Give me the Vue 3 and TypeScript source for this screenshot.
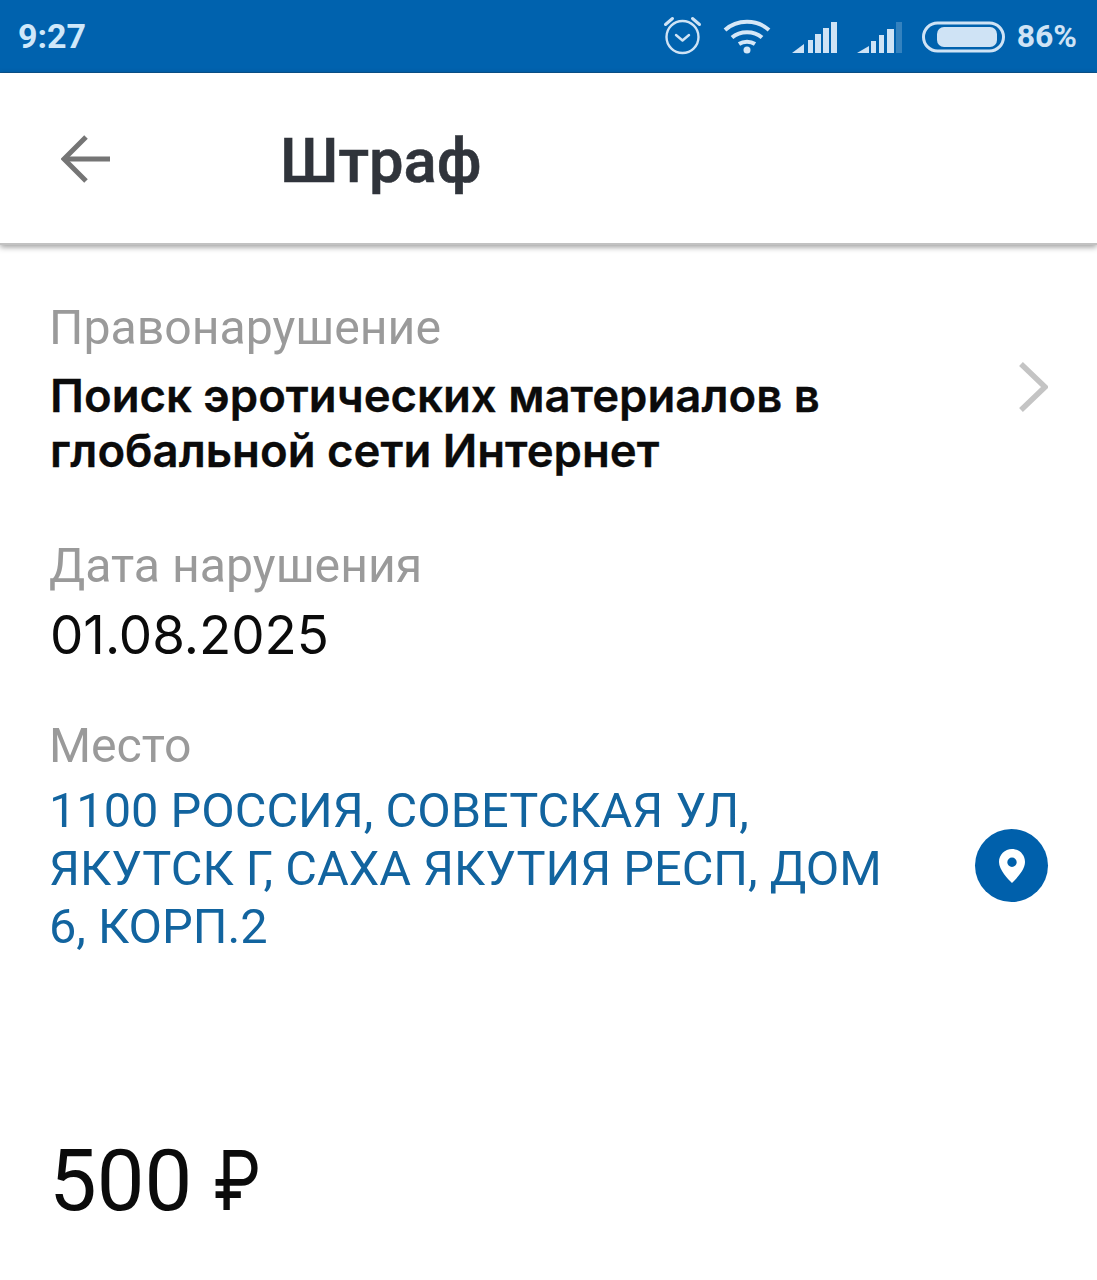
<script setup lang="ts">
</script>

<template>
  <div class="screen">
    <header class="status">
      <span class="time">9:27</span>
      <div class="status-right">
        <svg class="alarm" width="40" height="40" viewBox="0 0 40 40" fill="none" stroke="#cfe3f5" stroke-width="2.4">
          <circle cx="19.500" cy="21" r="16" />
          <path d="M13 19l6.500 5.500 6.500-5.500" stroke-linecap="round" stroke-linejoin="round" />
          <path d="M2.500 8.500L9.500 2.500M36.500 8.500L29.500 2.500" stroke-width="3" stroke-linecap="round" />
        </svg>
        <svg class="wifi" width="48" height="36" viewBox="0 0 48 36" fill="none" stroke="#d5e7f7" stroke-width="4">
          <path d="M2 12C14 1 34 1 46 12" />
          <path d="M9 19.500C17 12.500 31 12.500 39 19.500" />
          <path d="M16 26C20.500 23 27.500 23 32 26" />
          <circle cx="24" cy="32" r="3.500" fill="#d5e7f7" stroke="none" />
        </svg>
        <svg class="sig" width="46" height="32" viewBox="0 0 46 32" fill="#cfe3f5">
          <path d="M0 31L12 22V31Z" />
          <rect x="16" y="18" width="5" height="13" />
          <rect x="23" y="12" width="6" height="19" />
          <rect x="31" y="6" width="6" height="25" />
          <rect x="39" y="0" width="6" height="31" />
        </svg>
        <svg class="sig" width="46" height="32" viewBox="0 0 46 32" fill="#cfe3f5">
          <path d="M0 31L12 24V31Z" />
          <rect x="14" y="19" width="5" height="12" />
          <rect x="22" y="13" width="5" height="18" />
          <rect x="30" y="7" width="7" height="24" />
          <rect x="39" y="0" width="6" height="31" opacity="0.25" />
        </svg>
        <svg class="batt" width="84" height="32" viewBox="0 0 84 32" fill="none">
          <rect x="1.500" y="2" width="80" height="28" rx="14" stroke="#cfe3f5" stroke-width="3" />
          <rect x="15" y="6" width="60" height="20" rx="7" fill="#cfe3f5" />
        </svg>
        <span class="pct">86%</span>
      </div>
    </header>

    <nav class="toolbar">
      <svg class="back" width="50" height="48" viewBox="0 0 50 48" fill="none" stroke="#757575" stroke-width="5">
        <path d="M49 24H4" />
        <path d="M25 2L3 24L25 46" />
      </svg>
      <h1 class="title">Штраф</h1>
    </nav>

    <main class="content">
      <section class="block offence">
        <div class="grow">
          <div class="label">Правонарушение</div>
          <div class="strong">Поиск эротических материалов в<br />глобальной сети Интернет</div>
        </div>
        <svg class="chevron" width="30" height="50" viewBox="0 0 30 50" fill="none" stroke="#c4c4c4" stroke-width="5.500">
          <path d="M3 2L27 25L3 48" />
        </svg>
      </section>

      <section class="block date">
        <div class="label">Дата нарушения</div>
        <div class="value">01.08.2025</div>
      </section>

      <section class="block place">
        <div class="grow">
          <div class="label">Место</div>
          <div class="address">1100 РОССИЯ, СОВЕТСКАЯ УЛ,<br />ЯКУТСК Г, САХА ЯКУТИЯ РЕСП, ДОМ<br />6, КОРП.2</div>
        </div>
        <div class="pin">
          <svg width="26" height="34" viewBox="0 0 26 34">
            <path fill="#fff" fill-rule="evenodd" d="M13 0C5.800 0 0 5.800 0 13C0 21 9 30 13 34C17 30 26 21 26 13C26 5.800 20.200 0 13 0ZM13 8.500A4.700 4.700 0 1 1 13 17.900A4.700 4.700 0 1 1 13 8.500Z" />
          </svg>
        </div>
      </section>

      <div class="amount">500 <span class="rub">₽</span></div>
    </main>
  </div>
</template>

<style>
html, body { margin: 0; background: #fff; }
</style>

<style scoped>
.screen {
  width: 1097px;
  height: 1280px;
  overflow: hidden;
  background: #fff;
  font-family: Roboto, "Liberation Sans", sans-serif;
  display: flex;
  flex-direction: column;
}
.status {
  height: 73px;
  flex: none;
  background: #0062ae;
  border-bottom: 1px solid #0a5590;
  box-sizing: border-box;
  display: flex;
  align-items: center;
  justify-content: space-between;
  padding: 0 20px 0 18px;
}
.time {
  color: #cfe8fa;
  font-size: 34px;
  font-weight: 700;
}
.status-right {
  display: flex;
  align-items: center;
}
.alarm { margin-right: 20px; margin-top: 0; }
.wifi { margin-right: 21px; }
.sig { margin-right: 19px; margin-top: 3px; }
.batt { margin-right: 11px; margin-top: 2px; }
.pct {
  color: #cfe3f5;
  font-size: 32px;
  font-weight: 700;
}
.toolbar {
  height: 172px;
  flex: none;
  box-sizing: border-box;
  display: flex;
  align-items: center;
  padding-left: 61px;
  box-shadow: 0 2px 6px rgba(0, 0, 0, 0.4);
  border-bottom: 2px solid #c2c2c2;
  position: relative;
}
.back { flex: none; margin-top: 2px; }
.title {
  margin: 6px 0 0 169px;
  color: #30343b;
  font-size: 61.500px;
  font-weight: 500;
  line-height: 70px;
  -webkit-text-stroke: 0.6px #30343b;
}
.content {
  display: flex;
  flex-direction: column;
  padding: 0 49px 0 49px;
}
.block { display: flex; }
.grow { flex: 1; min-width: 0; }
.offence { padding-top: 56px; align-items: flex-start; }
.label {
  color: #9a9a9a;
  font-size: 48.200px;
  line-height: 54px;
}
.strong {
  margin-top: 13px;
  margin-left: 1px;
  font-family: Inter, "Liberation Sans", sans-serif;
  font-size: 45.500px;
  font-weight: 600;
  line-height: 55px;
  color: #0b0b0b;
  -webkit-text-stroke: 0.3px #0b0b0b;
}
.chevron { margin-top: 61px; flex: none; }
.date { flex-direction: column; padding-top: 61px; }
.value {
  margin-top: 11px;
  margin-bottom: -1px;
  margin-left: 1px;
  font-family: Inter, "Liberation Sans", sans-serif;
  font-size: 52.900px;
  line-height: 62px;
  color: #0b0b0b;
}
.place { padding-top: 54px; align-items: center; }
.address {
  margin-top: 9px;
  color: #12649f;
  font-size: 48.700px;
  line-height: 58px;
}
.pin {
  flex: none;
  width: 73px;
  height: 73px;
  border-radius: 50%;
  background: #0060ab;
  display: flex;
  align-items: center;
  justify-content: center;
  margin-top: 56px;
}
.amount {
  margin-top: 180px;
  font-size: 85px;
  line-height: 90px;
  color: #0b0b0b;
}
.rub {
  display: inline-block;
  font-family: Inter, sans-serif;
  font-size: 82px;
  transform: scaleX(0.84);
  transform-origin: left center;
}
</style>
